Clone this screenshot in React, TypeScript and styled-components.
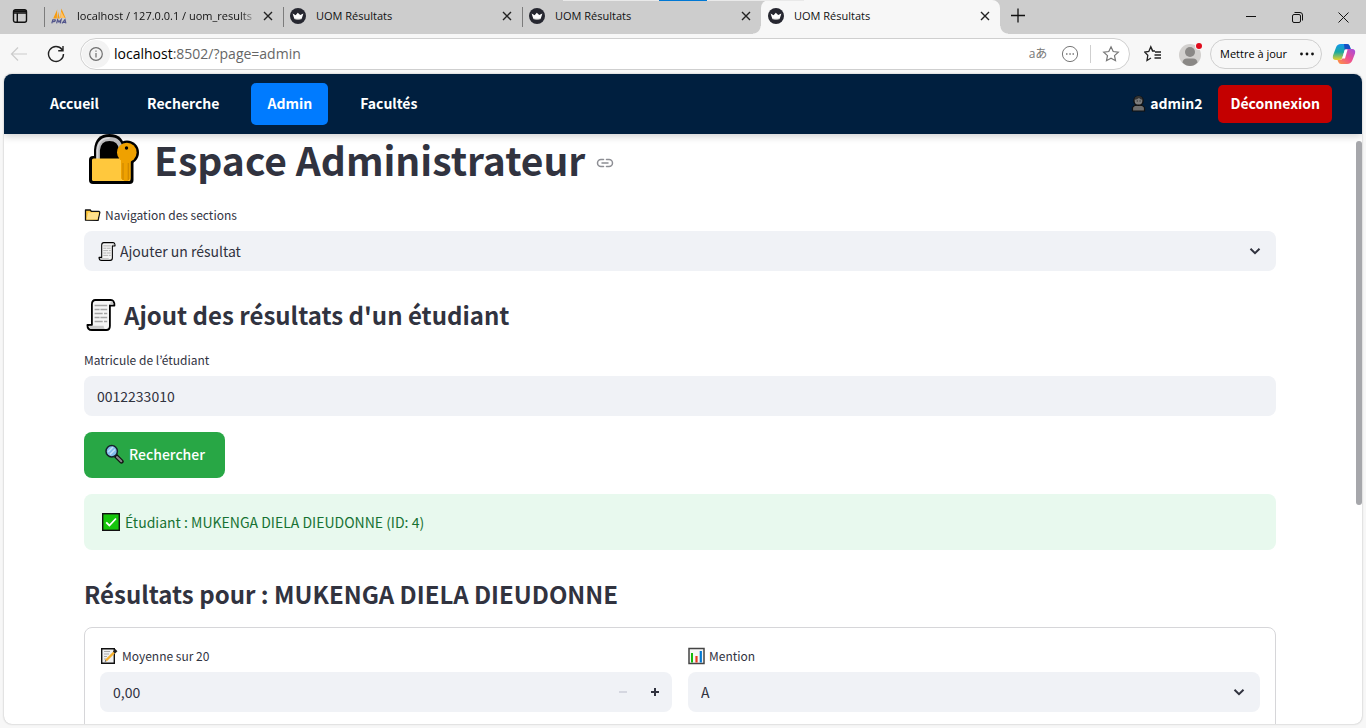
import React from 'react';
import styled, { createGlobalStyle } from 'styled-components';

const GlobalStyle = createGlobalStyle`
  * { box-sizing: border-box; }
  body { margin: 0; background: #f7f7f7; }
  button, input, select { font: inherit; color: inherit; }
  svg { display: block; flex: none; }
`;

const uiFont = "'Open Sans', 'Noto Sans', 'Noto Sans CJK JP', sans-serif";
const pageFont = "'Noto Sans CJK KR', 'Source Sans Pro', sans-serif";

/* ---------- browser window ---------- */

const Window = styled.div`
  position: relative;
  display: flex;
  flex-direction: column;
  height: 100vh;
  overflow: hidden;
  background: #f7f7f7;
  font-family: ${uiFont};
`;

const LoadStrip = styled.div`
  position: absolute;
  top: 0;
  left: 563px;
  width: 241px;
  height: 1px;
  background: linear-gradient(90deg, #e9e9e9 96px, #0078d4 96px, #0078d4 144px, #e9e9e9 144px);
`;

const TabStrip = styled.div`
  display: flex;
  flex: none;
  height: 34px;
  background: #cdcdcd;
`;

const GhostButton = styled.button<{ $width: number }>`
  display: flex;
  align-items: center;
  justify-content: center;
  flex: none;
  width: ${(p) => p.$width}px;
  padding: 0;
  border: 0;
  background: none;
`;

const TabActionsButton = styled(GhostButton)`
  padding: 0 4px 2px 0;
`;

const Tab = styled.div<{ $active?: boolean }>`
  position: relative;
  display: flex;
  align-items: center;
  gap: 10px;
  flex: 0 1 239px;
  min-width: 0;
  height: 34px;
  padding: 0 9px 2px 7px;
  border-radius: 8px 8px 0 0;
  background: ${(p) => (p.$active ? '#f7f7f7' : 'transparent')};
  font-size: 11px;
  line-height: 16px;
  color: #111;

  &::before {
    content: '';
    position: absolute;
    display: ${(p) => (p.$active ? 'none' : 'block')};
    left: 0;
    top: 7px;
    width: 1px;
    height: 20px;
    background: #7c7c7c;
  }
`;

const TabCorner = styled.span<{ $side: 'left' | 'right' }>`
  position: absolute;
  bottom: 0;
  ${(p) => p.$side}: -8px;
  width: 8px;
  height: 8px;
  background: radial-gradient(
    circle at ${(p) => (p.$side === 'left' ? '0 0' : '100% 0')},
    #cdcdcd 7px,
    #f7f7f7 8px
  );
`;

const TabTitle = styled.span<{ $fade?: boolean }>`
  flex: 1;
  min-width: 0;
  margin-right: -6px;
  overflow: hidden;
  white-space: nowrap;
  mask-image: ${(p) => (p.$fade ? 'linear-gradient(90deg, #000 90%, transparent)' : 'none')};
`;

const WindowControls = styled.div`
  display: flex;
  margin-left: auto;
`;

const Toolbar = styled.div`
  display: flex;
  align-items: center;
  flex: none;
  height: 40px;
  padding-right: 8px;
`;

const AddressBar = styled.div`
  display: flex;
  align-items: center;
  flex: 1;
  min-width: 0;
  height: 32px;
  margin-left: 6px;
  padding: 0 1px;
  border: 1px solid #cfcfcf;
  border-radius: 16px;
  background: #fff;
`;

const SiteInfo = styled.button`
  display: flex;
  align-items: center;
  justify-content: center;
  width: 28px;
  height: 28px;
  padding: 0;
  border: 0;
  border-radius: 14px;
  background: #f3f3f3;
`;

const Address = styled.div`
  flex: 1;
  padding-left: 4px;
  font-size: 14px;
  line-height: 20px;
  color: #666;

  b {
    font-weight: 400;
    color: #000;
  }
`;

const TranslateLabel = styled.span`
  font-size: 12px;
  line-height: 16px;
  color: #777;
`;

const Divider = styled.span`
  width: 1px;
  height: 18px;
  background: #cfcfcf;
`;

const UpdateButton = styled.button`
  display: flex;
  align-items: center;
  justify-content: space-between;
  width: 112px;
  height: 30px;
  margin: 0 8px 0 4px;
  padding: 0 6px 0 9px;
  border: 1px solid #cfcfcf;
  border-radius: 15px;
  background: #f7f7f7;
  font-size: 11px;
  line-height: 16px;
  white-space: nowrap;
`;

/* ---------- web page ---------- */

const Viewport = styled.div`
  position: relative;
  flex: 1;
  display: flex;
  flex-direction: column;
  min-height: 0;
  margin: 0 4px 4px;
  overflow: hidden;
  border-radius: 8px;
  background: #fff;
  box-shadow: 0 0 2px #aaa;
  font-family: ${pageFont};
  color: #31333f;
`;

const NavBar = styled.nav`
  display: flex;
  align-items: center;
  gap: 16px;
  flex: none;
  height: 60px;
  padding: 0 30px;
  background: #001f3f;
  box-shadow: 0 2px 8px rgba(0, 0, 0, 0.2);
  font-size: 14px;
  font-weight: 700;
  line-height: 22px;
  color: #fff;
`;

const NavLink = styled.a<{ $active?: boolean }>`
  padding: 9px 16px 11px;
  border-radius: 5px;
  background: ${(p) => (p.$active ? '#007bff' : 'transparent')};
  color: #fff;
  text-decoration: none;
`;

const UserName = styled.span`
  display: flex;
  align-items: center;
  gap: 4px;
  margin-left: auto;
  padding-bottom: 2px;
`;

const LogoutLink = styled.a`
  padding: 7px 12px 9px;
  border-radius: 5px;
  background: #c40000;
  color: #fff;
  text-decoration: none;
`;

const Main = styled.main`
  display: flex;
  flex-direction: column;
  gap: 16px;
  flex: 1;
  min-height: 0;
  padding: 0 86px 0 80px;

  & > * { flex: none; }
`;

const PageTitle = styled.h1`
  display: flex;
  align-items: center;
  gap: 15px;
  margin: 0;
  padding: 0 0 3px 5px;
  font-size: 39px;
  font-weight: 700;
  line-height: 50px;
`;

const AnchorLink = styled.a`
  margin: 8px 0 0 -4px;
`;

const SectionTitle = styled.h2`
  display: flex;
  align-items: center;
  gap: 8px;
  margin: 0;
  padding: 12px 0 1px;
  font-size: 24px;
  font-weight: 700;
  line-height: 32px;
`;

const Field = styled.div`
  display: flex;
  flex-direction: column;
  gap: 4px;
  flex: 1;
  min-width: 0;
`;

const Label = styled.label`
  display: flex;
  align-items: center;
  gap: 4px;
  font-size: 12px;
  line-height: 24px;
`;

const Control = styled.div`
  display: flex;
  align-items: center;
  height: 40px;
  padding: 0 1px 0 13px;
  border-radius: 8px;
  background: #f0f2f6;
  font-size: 14px;
  line-height: 22px;
`;

const ControlIcon = styled.span`
  margin-right: 4px;
`;

const TextInput = styled.input`
  flex: 1;
  min-width: 0;
  height: 40px;
  padding: 0;
  border: 0;
  outline: 0;
  background: none;
`;

const Select = styled.select`
  flex: 1;
  min-width: 0;
  height: 40px;
  padding: 0;
  border: 0;
  outline: 0;
  appearance: none;
  background: none;
`;

const Chevron = styled.span`
  margin-right: 13px;
  pointer-events: none;
`;

const SearchButton = styled.button`
  display: flex;
  align-items: center;
  align-self: flex-start;
  gap: 5px;
  height: 46px;
  padding: 0 20px 2px;
  border: 0;
  border-radius: 8px;
  background: #28a745;
  color: #fff;
  font-size: 14px;
  font-weight: 500;
  line-height: 22px;
`;

const Alert = styled.div`
  display: flex;
  align-items: center;
  gap: 5px;
  height: 56px;
  padding: 0 18px;
  border-radius: 8px;
  background: #e8f9ee;
  color: #177233;
  font-size: 14px;
  line-height: 24px;
`;

const ResultForm = styled.form`
  display: flex;
  gap: 16px;
  height: 200px;
  padding: 16px 15px;
  border: 1px solid #d6d6d9;
  border-radius: 8px;
`;

const ScrollThumb = styled.div`
  position: absolute;
  top: 67px;
  right: 0;
  width: 6px;
  height: 364px;
  border-radius: 3px;
  background: #a6a7ab;
`;

/* ---------- icons ---------- */

const CloseIcon = () => (
  <svg width="12" height="12" viewBox="0 0 12 12" stroke="#222" strokeWidth="1.4" fill="none">
    <path d="M2 2l8 8M10 2l-8 8" />
  </svg>
);

const CrownIcon = () => (
  <svg width="16" height="16" viewBox="0 0 16 16">
    <circle cx="8" cy="8" r="8" fill="#262730" />
    <path d="M2.600 5.600l3 1.600L7.800 4.800l2.400 2.300 3.200-1.500-1.700 5.200q-3.700 1-7.400 0z" fill="#fff" />
    <path d="M4.200 10.200q3.800 1.200 7.600 0l-.4 1.100q-3.400.9-6.800 0z" fill="#bbb" />
  </svg>
);

const PmaIcon = () => (
  <svg width="16" height="16" viewBox="0 0 16 16">
    <path d="M6.200 1.600L2.200 10.400h3.600zM7 3.400L6.400 10.400h2.400zM10.400.6L9.200 10h5.400z" fill="#f89c0e" />
    <path d="M10.200 3.400l3.600 6.600H9.400z" fill="#ffc266" />
    <g stroke="#53568c" strokeWidth="1.2" fill="none">
      <path d="M.8 15.400l1-3.600h2.400q.8 1.800-2.600 1.900M5.600 15.400l1-3.600 1.300 2.200 2.200-2.200-.9 3.600M11 15.400l3-3.800.9 3.800M12.200 14.300h2.400" />
    </g>
  </svg>
);

const SidebarIcon = () => (
  <svg width="16" height="16" viewBox="0 0 16 16" fill="none" stroke="#111" strokeWidth="1.4">
    <rect x="1.500" y="1.700" width="13" height="12.600" rx="2" />
    <path d="M1.500 5h13M5.300 5v9.300" />
    <path d="M2 3.200h12" strokeWidth="2" />
  </svg>
);

const LockIcon = () => (
  <svg width="50" height="50" viewBox="0 0 50 50">
    <g fill="#000">
      <path d="M5 28V16Q6 0 20.500 0T36 16v12z" />
      <rect x="0" y="22" width="44.500" height="28" rx="4" />
      <circle cx="38" cy="18.500" r="12" />
    </g>
    <path d="M9 25V16Q10 5 20.500 5T32 16v9" fill="none" stroke="#b9b9bb" strokeWidth="3.800" />
    <path d="M8.500 25V16Q9.500 4 20.500 4" fill="none" stroke="#d8d8da" strokeWidth="1.500" />
    <rect x="3" y="24.500" width="38.500" height="22.500" rx="1.500" fill="#ffc83d" />
    <path d="M32 24h9.500v20.500L39 47h-3.500l-3.500-2.500z" fill="#efa100" />
    <path d="M34 29v17M39.300 29v17" stroke="#d18a00" strokeWidth="1.300" />
    <circle cx="37.800" cy="18.500" r="9.800" fill="#efa100" />
    <circle cx="37.500" cy="14" r="1.700" fill="#000" />
  </svg>
);

const ScrollIcon = ({ size }: { size: number }) => (
  <svg width={size} height={size} viewBox="0 0 32 32">
    <g transform="translate(2.500 0) scale(.9 1)">
      <path d="M6 5.500Q6 1 10 1h17q4 0 4 5.500h-5V27q0 4-4 4H6q-5 0-5-5h5z" fill="#f4f4f4" stroke="#000" strokeWidth="2" strokeLinejoin="round" />
      <path d="M26.500 6V4q0-2 1.500-2t2 3.500zM3 26.800h16q0 2.500 1.500 3.200H6q-3 0-3-3.200z" fill="#c9c9c9" />
      <path d="M9 6.500h14M9 10.500h5.500M15.500 10.500H23M9 14.500h9M19.500 14.500H23M9 18.500h5.500M15.500 18.500H23M9 22.500h9M19.500 22.500H23" stroke="#a3a3a3" strokeWidth="1.400" />
    </g>
  </svg>
);

const FolderIcon = () => (
  <svg width="17" height="14" viewBox="0 0 17 14">
    <path d="M1.500 12.200V2h4.800l1 1.300h7.500l1 1-1.700 8z" fill="#ffc83d" stroke="#111" strokeWidth="1.300" strokeLinejoin="round" />
    <path d="M2.500 11.600l1.800-7H15l-1.500 7z" fill="#ffe08c" />
  </svg>
);

const SearchIcon = () => (
  <svg width="20" height="20" viewBox="0 0 20 20">
    <path d="M11.500 11.500l6 6" stroke="#111" strokeWidth="4.400" strokeLinecap="round" />
    <path d="M13 13l4.300 4.300" stroke="#848488" strokeWidth="2" strokeLinecap="round" />
    <circle cx="7.700" cy="7.200" r="5.700" fill="#83bdec" stroke="#17202c" strokeWidth="1.500" />
    <path d="M4 8l5-5M6 10.500l5-5" stroke="#c5e2fa" strokeWidth="1.500" />
  </svg>
);

const CheckIcon = () => (
  <svg width="18" height="18" viewBox="0 0 18 18">
    <rect x=".7" y=".7" width="16.600" height="16.600" fill="#16c60c" stroke="#111" strokeWidth="1.400" />
    <path d="M4.200 9.300l3.200 3.200 6.600-7" fill="none" stroke="#fff" strokeWidth="1.800" />
  </svg>
);

const NoteIcon = () => (
  <svg width="18" height="18" viewBox="0 0 18 18">
    <path d="M1.700 1.700h12.600v14.600H1.700z" fill="#f0f0f0" stroke="#111" strokeWidth="1.400" />
    <path d="M4 4.500h6M4 7h5M4 9.500h3M4 12h2" stroke="#aaa" />
    <path d="M6 13.500l8.500-8.500" stroke="#f6b02c" strokeWidth="2.400" />
    <path d="M14 5.500l2.400-2.400" stroke="#222" strokeWidth="3" />
    <path d="M4.700 14.700l1.800-.5-1.200-1.200z" fill="#333" />
  </svg>
);

const ChartIcon = () => (
  <svg width="17" height="18" viewBox="0 0 17 18">
    <rect x="1" y="1.500" width="15" height="15" fill="#f5f5f5" stroke="#444" strokeWidth="1.500" />
    <path d="M4 6v9.500" stroke="#16b80c" strokeWidth="2" />
    <path d="M8.500 9v6.500" stroke="#e83a1f" strokeWidth="2.200" />
    <path d="M12.800 4v11.500" stroke="#0078d4" strokeWidth="2.200" />
  </svg>
);

const PersonIcon = () => (
  <svg width="15" height="17" viewBox="0 0 15 17">
    <path d="M1.500 16v-3.500Q2.500 10.500 6 10h3q3.500.5 4.500 2.500V16z" fill="#6d6d6d" stroke="#111" strokeWidth="1.200" />
    <circle cx="7.500" cy="5.700" r="4.600" fill="#7d7d7d" stroke="#111" strokeWidth="1.400" />
    <path d="M3.200 4.800Q4 1 7.500 1t4.300 3.800Q9 4.500 8 3 6 5 3.200 4.800z" fill="#333" />
    <path d="M5.800 6h.9M8.600 6h.9" stroke="#111" />
  </svg>
);

const ChevronIcon = () => (
  <svg width="14" height="10" viewBox="0 0 14 10" fill="none" stroke="#31333f" strokeWidth="2">
    <path d="M2.500 2.800L7 7.200l4.500-4.400" />
  </svg>
);

const AnchorIcon = () => (
  <svg width="18" height="12" viewBox="0 0 18 12" fill="none" stroke="#8d8e94" strokeWidth="1.500" strokeLinecap="round">
    <path d="M7.500 2.500H5a3.500 3.500 0 000 7h2.500M10.500 2.500H13a3.500 3.500 0 010 7h-2.500M6 6h6" />
  </svg>
);

const CopilotIcon = () => (
  <svg width="24" height="24" viewBox="0 0 24 24">
    <defs>
      <linearGradient id="cpBlue" x1="0" y1="0" x2="0" y2="1">
        <stop offset="0" stopColor="#1597ee" />
        <stop offset=".5" stopColor="#18a9a0" />
        <stop offset="1" stopColor="#e9d02a" />
      </linearGradient>
      <linearGradient id="cpPink" x1="1" y1="0" x2="0" y2="1">
        <stop offset="0" stopColor="#a24de0" />
        <stop offset=".5" stopColor="#ee5090" />
        <stop offset="1" stopColor="#ff9a3c" />
      </linearGradient>
    </defs>
    <path d="M9 2h6q2 0 2.700 2l1 3H15q-2 0-2.600 2l-2 6.500Q9.700 18 7.500 18H4Q0 18 1 13.500l3-8Q5 2 9 2z" fill="url(#cpBlue)" />
    <path d="M12 2h3q2 0 2.700 2l1 3H15q-1.600 0-2.300 1.500z" fill="#164fc4" />
    <path d="M15 22H9q-2 0-2.700-2l-.8-2H8q2 0 2.700-2l2-7q.6-2 2.800-2H20q4 0 3 4.500l-2.500 6.500Q19 22 15 22z" fill="url(#cpPink)" />
    <path d="M10.200 16.500l2.600-9h2.800l-2.600 9z" fill="#fff" />
  </svg>
);

const starPath = 'M9 1.800l2.200 4.700 5.100.6-3.800 3.500 1 5.100L9 13.200l-4.500 2.500 1-5.100L1.700 7.100l5.100-.6z';

const tabs = [
  { title: 'localhost / 127.0.0.1 / uom_results', icon: <PmaIcon />, fade: true },
  { title: 'UOM Résultats', icon: <CrownIcon /> },
  { title: 'UOM Résultats', icon: <CrownIcon /> },
  { title: 'UOM Résultats', icon: <CrownIcon />, active: true },
];

const BrowserTabs = () => (
  <TabStrip>
    <TabActionsButton $width={44} aria-label="Onglets verticaux">
      <SidebarIcon />
    </TabActionsButton>
    {tabs.map((tab, i) => (
      <Tab key={i} $active={tab.active}>
        {tab.active && <TabCorner $side="left" />}
        {tab.icon}
        <TabTitle $fade={tab.fade}>{tab.title}</TabTitle>
        <GhostButton $width={12} aria-label="Fermer l'onglet">
          <CloseIcon />
        </GhostButton>
        {tab.active && <TabCorner $side="right" />}
      </Tab>
    ))}
    <GhostButton $width={36} aria-label="Nouvel onglet">
      <svg width="16" height="18" viewBox="0 0 16 18" stroke="#111" strokeWidth="1.300">
        <path d="M1 7.500h14M8 .5v14" />
      </svg>
    </GhostButton>
    <WindowControls>
      <GhostButton $width={46} aria-label="Réduire">
        <svg width="10" height="10" viewBox="0 0 10 10" stroke="#111">
          <path d="M0 4.500h10" />
        </svg>
      </GhostButton>
      <GhostButton $width={46} aria-label="Restaurer">
        <svg width="11" height="11" viewBox="0 0 11 11" fill="none" stroke="#111">
          <rect x=".5" y="2.500" width="8" height="8" rx="1.500" />
          <path d="M2.500.5H8q2.500 0 2.500 2.500v5.500" />
        </svg>
      </GhostButton>
      <GhostButton $width={46} aria-label="Fermer">
        <svg width="11" height="11" viewBox="0 0 11 11" stroke="#111">
          <path d="M.5.5l10 10M10.500.5l-10 10" />
        </svg>
      </GhostButton>
    </WindowControls>
  </TabStrip>
);

const BrowserToolbar = () => (
  <Toolbar>
    <GhostButton $width={38} aria-label="Précédent">
      <svg width="18" height="16" viewBox="0 0 18 16" fill="none" stroke="#cbcbcb" strokeWidth="1.200">
        <path d="M17 8H1.500M8 1.500L1.500 8 8 14.500" />
      </svg>
    </GhostButton>
    <GhostButton $width={36} aria-label="Actualiser">
      <svg width="18" height="18" viewBox="0 0 18 18" fill="none" stroke="#222" strokeWidth="1.400">
        <path d="M16.500 9A7.500 7.500 0 1115 4.500l.8 1M16 1v4.800h-4.800" />
      </svg>
    </GhostButton>
    <AddressBar>
      <SiteInfo aria-label="Informations sur le site">
        <svg width="14" height="14" viewBox="0 0 14 14" fill="none" stroke="#707070" strokeWidth="1.200">
          <circle cx="7" cy="7" r="6.300" />
          <path d="M7 6v4.500M7 3.500v1.300" />
        </svg>
      </SiteInfo>
      <Address>
        <b>localhost</b>:8502/?page=admin
      </Address>
      <GhostButton $width={32} aria-label="Traduire">
        <TranslateLabel>aあ</TranslateLabel>
      </GhostButton>
      <GhostButton $width={32} aria-label="Plus">
        <svg width="18" height="18" viewBox="0 0 18 18" fill="none" stroke="#777">
          <circle cx="9" cy="9" r="7.600" />
          <path d="M5 9h1.500M8.300 9h1.500M11.500 9H13" strokeWidth="1.500" />
        </svg>
      </GhostButton>
      <GhostButton as="span" $width={8}>
        <Divider />
      </GhostButton>
      <GhostButton $width={34} aria-label="Ajouter aux favoris">
        <svg width="18" height="18" viewBox="0 0 18 18" fill="none" stroke="#777" strokeWidth="1.200">
          <path d={starPath} />
        </svg>
      </GhostButton>
    </AddressBar>
    <GhostButton $width={46} aria-label="Favoris">
      <svg width="18" height="18" viewBox="0 0 18 18" fill="none" stroke="#222" strokeWidth="1.300">
        <path d="M11 5.800L8.500 6 6.800 1.800 4.800 6.500l-4 .6 3 3.200-.8 5.200 4-2.500M11 7h6M10.500 10h6.500M10.500 13H17M6.800 1.800L8.800 6" />
      </svg>
    </GhostButton>
    <GhostButton $width={30} aria-label="Profil">
      <svg width="24" height="26" viewBox="0 0 24 26">
        <circle cx="11" cy="14" r="11" fill="#d2d0ce" />
        <circle cx="11" cy="11" r="5" fill="#8a8886" />
        <path d="M3.500 21.500Q4 17.500 8 17.500h6q4 0 4.500 4-3.500 3.500-7.500 3.500t-7.500-3.500z" fill="#8a8886" />
        <circle cx="20" cy="5" r="4" fill="#f7f7f7" />
        <circle cx="20" cy="5" r="3" fill="#e00b1c" />
      </svg>
    </GhostButton>
    <UpdateButton>
      Mettre à jour
      <svg width="16" height="4" viewBox="0 0 16 4" fill="#111">
        <circle cx="2.500" cy="2" r="1.400" />
        <circle cx="8" cy="2" r="1.400" />
        <circle cx="13.500" cy="2" r="1.400" />
      </svg>
    </UpdateButton>
    <GhostButton $width={28} aria-label="Copilot">
      <CopilotIcon />
    </GhostButton>
  </Toolbar>
);

export default function App() {
  return (
    <>
      <GlobalStyle />
      <Window>
        <BrowserTabs />
        <LoadStrip />
        <BrowserToolbar />
        <Viewport>
          <NavBar>
            <NavLink href="?page=accueil">Accueil</NavLink>
            <NavLink href="?page=recherche">Recherche</NavLink>
            <NavLink href="?page=admin" $active>
              Admin
            </NavLink>
            <NavLink href="?page=facultes">Facultés</NavLink>
            <UserName>
              <PersonIcon />
              admin2
            </UserName>
            <LogoutLink href="?logout=1">Déconnexion</LogoutLink>
          </NavBar>
          <Main>
            <PageTitle id="espace">
              <LockIcon />
              Espace Administrateur
              <AnchorLink href="#espace" aria-label="Lien vers ce titre">
                <AnchorIcon />
              </AnchorLink>
            </PageTitle>
            <Field>
              <Label htmlFor="section">
                <FolderIcon />
                Navigation des sections
              </Label>
              <Control>
                <ControlIcon>
                  <ScrollIcon size={19} />
                </ControlIcon>
                <Select id="section">
                  <option>Ajouter un résultat</option>
                </Select>
                <Chevron>
                  <ChevronIcon />
                </Chevron>
              </Control>
            </Field>
            <SectionTitle>
              <ScrollIcon size={32} />
              Ajout des résultats d'un étudiant
            </SectionTitle>
            <Field>
              <Label htmlFor="matricule">Matricule de l’étudiant</Label>
              <Control>
                <TextInput id="matricule" defaultValue="0012233010" />
              </Control>
            </Field>
            <SearchButton>
              <SearchIcon />
              Rechercher
            </SearchButton>
            <Alert role="status">
              <CheckIcon />
              Étudiant : MUKENGA DIELA DIEUDONNE (ID: 4)
            </Alert>
            <SectionTitle>Résultats pour : MUKENGA DIELA DIEUDONNE</SectionTitle>
            <ResultForm>
              <Field>
                <Label htmlFor="moyenne">
                  <NoteIcon />
                  Moyenne sur 20
                </Label>
                <Control>
                  <TextInput id="moyenne" inputMode="decimal" defaultValue="0,00" />
                  <GhostButton type="button" $width={32} aria-label="Diminuer" disabled>
                    <svg width="8" height="8" viewBox="0 0 8 8" stroke="#d5d7e0" strokeWidth="2">
                      <path d="M0 4h8" />
                    </svg>
                  </GhostButton>
                  <GhostButton type="button" $width={32} aria-label="Augmenter">
                    <svg width="8" height="8" viewBox="0 0 8 8" stroke="#31333f" strokeWidth="2">
                      <path d="M0 4h8M4 0v8" />
                    </svg>
                  </GhostButton>
                </Control>
              </Field>
              <Field>
                <Label htmlFor="mention">
                  <ChartIcon />
                  Mention
                </Label>
                <Control>
                  <Select id="mention">
                    <option>A</option>
                  </Select>
                  <Chevron>
                    <ChevronIcon />
                  </Chevron>
                </Control>
              </Field>
            </ResultForm>
          </Main>
          <ScrollThumb />
        </Viewport>
      </Window>
    </>
  );
}
